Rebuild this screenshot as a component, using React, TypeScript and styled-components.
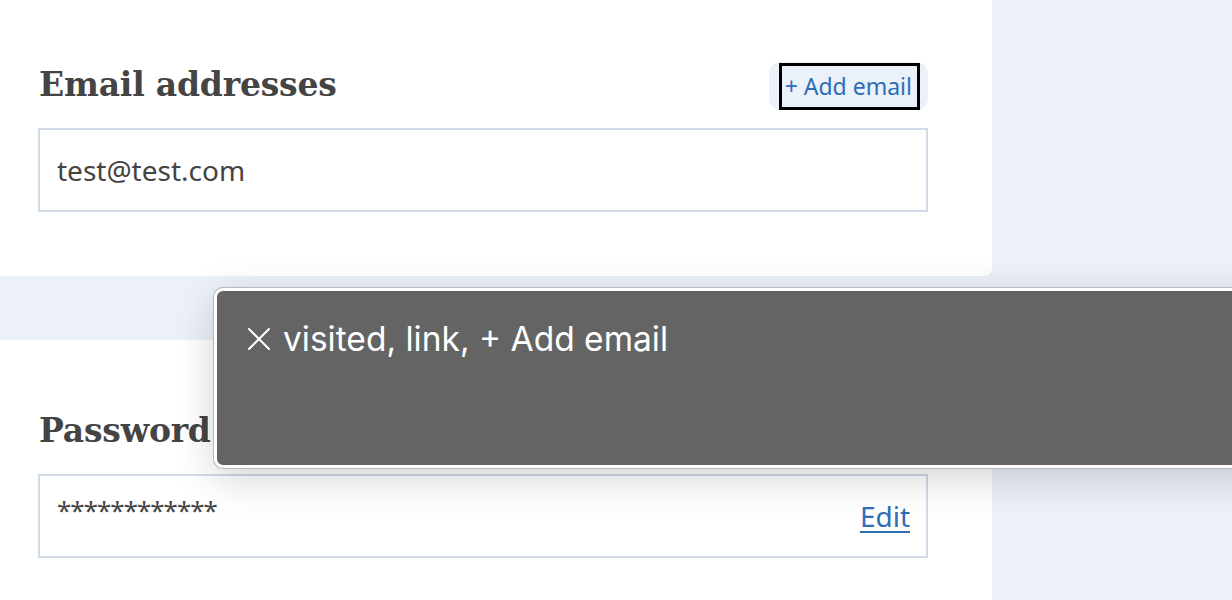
import React from 'react';
import styled, { createGlobalStyle } from 'styled-components';

const GlobalStyle = createGlobalStyle`
  html, body {
    margin: 0;
    padding: 0;
    background: #ecf1f9;
  }
  body {
    font-family: 'Noto Sans', 'Open Sans', sans-serif;
    overflow: hidden;
  }
`;

function CloseIcon() {
  return (
    <svg width="22" height="22" viewBox="0 0 22 22" fill="none">
      <path d="M1 1L21 21M21 1L1 21" stroke="#fff" strokeWidth="2" strokeLinecap="round" />
    </svg>
  );
}

function App() {
  return (
    <Layer>
      <GlobalStyle />
      <Column>
        <Card $first>
          <HeadRow>
            <Heading>Email addresses</Heading>
            <AddPill>
              <AddLink href="#">+ Add email</AddLink>
            </AddPill>
          </HeadRow>
          <Field>
            <FieldText>test@test.com</FieldText>
          </Field>
        </Card>
        <Card>
          <HeadRow>
            <Heading>Password</Heading>
          </HeadRow>
          <Field>
            <Stars>************</Stars>
            <EditLink href="#">Edit</EditLink>
          </Field>
        </Card>
      </Column>
      <Inspector>
        <InspectorLine>
          <CloseIcon />
          <span>visited, link, + Add email</span>
        </InspectorLine>
      </Inspector>
    </Layer>
  );
}
export default App;

const Layer = styled.div`
  position: relative;
  width: 1232px;
  height: 600px;
  overflow: hidden;
`;

const Column = styled.div`
  width: 992px;
  display: flex;
  flex-direction: column;
  gap: 64px;
`;

const Card = styled.section<{ $first?: boolean }>`
  background: #fff;
  padding: ${props => (props.$first ? '62px 64px 64px 38px' : '68px 64px 64px 38px')};
  border-radius: ${props => (props.$first ? '0 0 8px 0' : '0 8px 0 0')};
  display: flex;
  flex-direction: column;
  gap: 18px;
`;

const HeadRow = styled.div`
  height: 48px;
  display: flex;
  align-items: center;
  justify-content: space-between;
`;

const Heading = styled.h2`
  margin: -3px 0 0 1px;
  font-family: 'DejaVu Serif', 'Liberation Serif', serif;
  font-weight: 700;
  font-size: 33px;
  color: #444;
  letter-spacing: -0.2px;
`;

const AddPill = styled.div`
  height: 48px;
  padding: 0 11px 0 13px;
  border-radius: 12px;
  background: #ebf1f9;
  display: flex;
  align-items: center;
`;

const AddLink = styled.a`
  display: flex;
  align-items: center;
  height: 41px;
  padding: 0 5px 0 3px;
  outline: 3px solid #000;
  color: #2f6db5;
  font-size: 23px;
  text-decoration: none;
`;

const Field = styled.div`
  height: 84px;
  box-sizing: border-box;
  border: 2px solid #d0dcea;
  padding: 0 16px 0 17px;
  display: flex;
  align-items: center;
  justify-content: space-between;
`;

const FieldText = styled.span`
  font-size: 28px;
  color: #444;
`;

const Stars = styled.span`
  font-size: 26px;
  color: #444;
  letter-spacing: -1px;
  margin-top: -12px;
`;

const EditLink = styled.a`
  font-size: 28px;
  color: #2f6db5;
  text-decoration: underline;
  text-underline-offset: 4px;
  text-decoration-thickness: 2px;
`;

const Inspector = styled.div`
  position: absolute;
  left: 214px;
  top: 288px;
  width: 1100px;
  height: 180px;
  box-sizing: border-box;
  background: #646464;
  border: 3px solid #fff;
  border-radius: 9px;
  box-shadow: 0 0 0 1px #b9b9b9, 0 10px 40px rgba(0, 0, 0, 0.18);
  padding: 26px 0 0 31px;
`;

const InspectorLine = styled.div`
  display: flex;
  align-items: center;
  gap: 13px;
  color: #fff;
  font-family: Inter, 'Noto Sans', sans-serif;
  font-size: 33.5px;
  line-height: 44px;
`;
